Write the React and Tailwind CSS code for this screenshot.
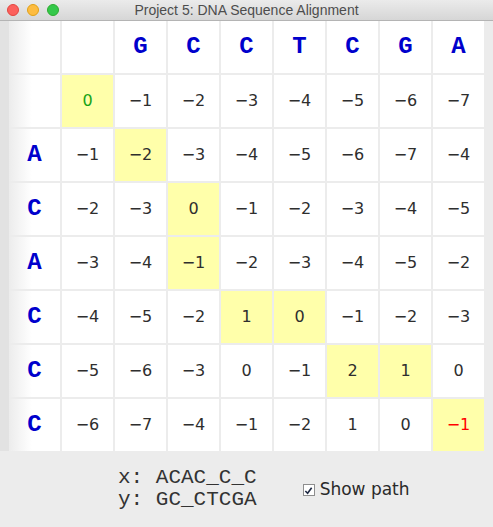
const header = ['G', 'C', 'C', 'T', 'C', 'G', 'A']

// each row: label, then 8 score cells; path = highlighted cell indexes
const rows = [
  { label: '', values: [0, -1, -2, -3, -4, -5, -6, -7], path: [0] },
  { label: 'A', values: [-1, -2, -3, -4, -5, -6, -7, -4], path: [1] },
  { label: 'C', values: [-2, -3, 0, -1, -2, -3, -4, -5], path: [2] },
  { label: 'A', values: [-3, -4, -1, -2, -3, -4, -5, -2], path: [2] },
  { label: 'C', values: [-4, -5, -2, 1, 0, -1, -2, -3], path: [3, 4] },
  { label: 'C', values: [-5, -6, -3, 0, -1, 2, 1, 0], path: [5, 6] },
  { label: 'C', values: [-6, -7, -4, -1, -2, 1, 0, -1], path: [7] }
]

const fmt = (n) => (n < 0 ? `\u2212${Math.abs(n)}` : `${n}`)

const letterCls =
  "font-['Liberation_Mono',monospace] font-bold text-[24px] text-[#0000cc]"
const cellCls = 'flex items-center justify-center bg-white'
const labelCellCls =
  'flex items-center justify-center bg-[linear-gradient(to_right,#ececec,#ffffff_45%)]'

const TitleBar = () => (
  <div className="relative flex h-[21px] items-center justify-center border-b border-[#b4b4b4] bg-[linear-gradient(to_bottom,#ebebeb,#d6d6d6)]">
    <div className="absolute left-[7px] top-[4px] flex gap-[8px]">
      <span className="h-[12px] w-[12px] rounded-full border border-[#e2463f] bg-[#fc605c]" />
      <span className="h-[12px] w-[12px] rounded-full border border-[#e1a116] bg-[#fdbc40]" />
      <span className="h-[12px] w-[12px] rounded-full border border-[#2dac2f] bg-[#34c84a]" />
    </div>
    <span className="font-['Liberation_Sans',sans-serif] text-[14px] text-[#4d4d4d]">
      Project 5: DNA Sequence Alignment
    </span>
  </div>
)

const App = () => {
  return (
    <div className="flex h-[527px] w-[493px] flex-col overflow-hidden bg-[#ececec]">
      <TitleBar />
      <div className="flex">
        <div className="w-[9px] bg-[#e2e2e2]" />
        <div className="grid grid-cols-[repeat(9,51px)] auto-rows-[52px] gap-[2px] font-['DejaVu_Sans',sans-serif] text-[16px] text-[#2e2e2e]">
          <div className={labelCellCls} />
          <div className={cellCls} />
          {header.map((ch, i) => (
            <div key={`h${i}`} className={cellCls}>
              <span className={letterCls}>{ch}</span>
            </div>
          ))}
          {rows.map((row, r) => (
            <div key={`r${r}`} className="contents">
              <div className={labelCellCls}>
                <span className={letterCls}>{row.label}</span>
              </div>
              {row.values.map((v, c) => {
                const onPath = row.path.includes(c)
                const isStart = r === 0 && c === 0
                const isEnd = r === rows.length - 1 && c === 7
                return (
                  <div
                    key={`c${r}-${c}`}
                    className={`flex items-center justify-center ${onPath ? 'bg-[#ffffaa]' : 'bg-white'} ${isStart ? 'text-[#17a317]' : isEnd ? 'text-[#ff0000]' : ''}`}
                  >
                    {fmt(v)}
                  </div>
                )
              })}
            </div>
          ))}
        </div>
      </div>

      <div className="flex items-center pl-[118px] pt-[16px]">
        <div className="font-['Liberation_Mono',monospace] text-[21px] leading-[22px] text-[#333]">
          <div className="whitespace-pre">x: ACAC_C_C</div>
          <div className="whitespace-pre">y: GC_CTCGA</div>
        </div>
        <label className="ml-[46px] mt-[2px] flex items-center gap-[5px] font-['DejaVu_Sans',sans-serif] text-[17px] text-[#2a2a2a]">
          <span className="flex h-[12px] w-[12px] items-center justify-center border border-[#8e8e8e] bg-white">
            <svg viewBox="0 0 10 10" className="h-[9px] w-[9px]">
              <path d="M1.5 5.5 L4 8 L8.5 2" fill="none" stroke="#1f2a44" strokeWidth="1.8" />
            </svg>
          </span>
          Show path
        </label>
      </div>
    </div>
  )
}

export default App
